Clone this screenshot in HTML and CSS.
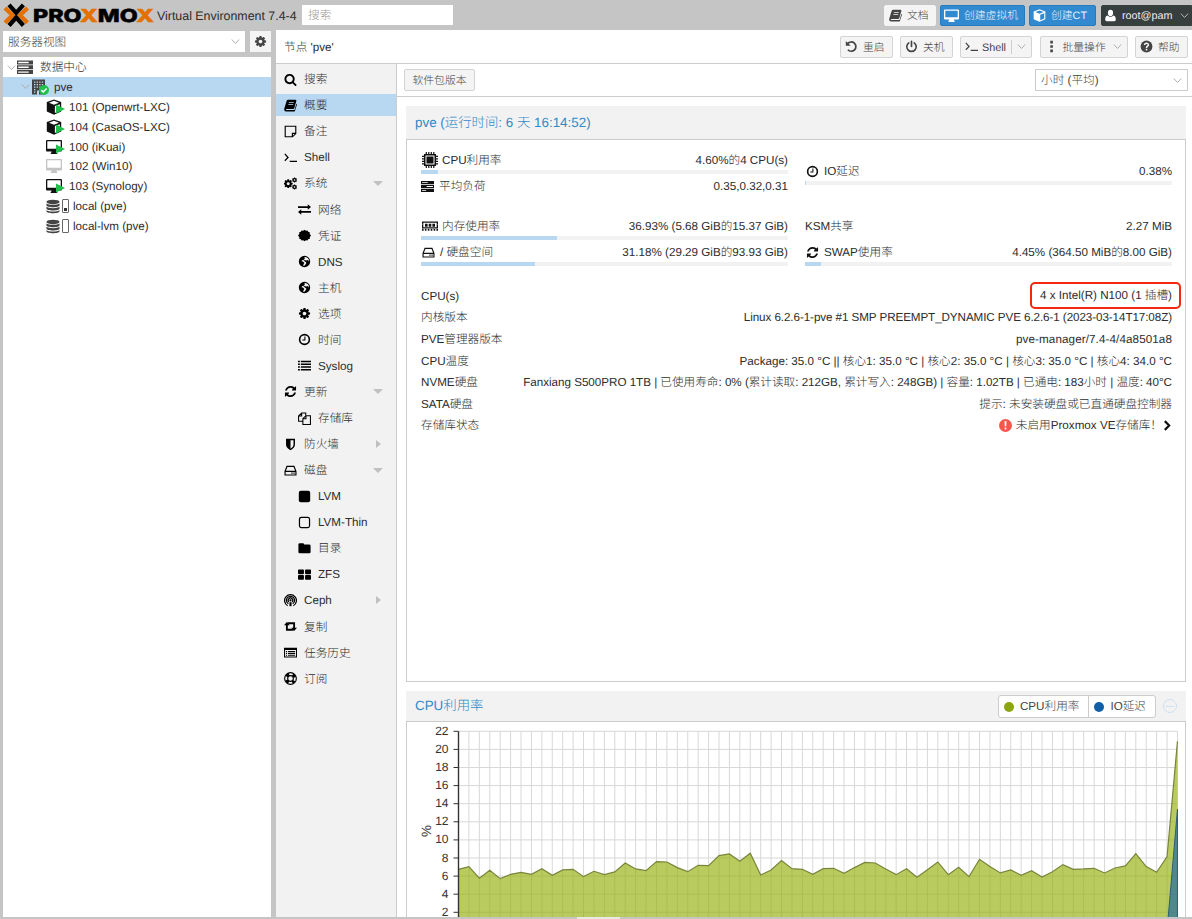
FILE: index.html
```
<!DOCTYPE html>
<html lang="zh-Hans">
<head>
    <meta charset="UTF-8">
    <meta name="viewport" content="width=device-width, initial-scale=1.0">
    <title>pve - Proxmox Virtual Environment</title>
    <link rel="stylesheet" href="styles.css">
</head>
<body>
    <svg class="sprite" xmlns="http://www.w3.org/2000/svg">
        <symbol id="search" viewBox="0 0 1792 1792"><path d="M1216 832q0-185-131.5-316.5t-316.5-131.5-316.5 131.5-131.5 316.5 131.5 316.5 316.5 131.5 316.5-131.5 131.5-316.5zm512 832q0 52-38 90t-90 38q-54 0-90-38l-343-342q-179 124-399 124-143 0-273.5-55.5t-225-150-150-225-55.5-273.5 55.5-273.5 150-225 225-150 273.5-55.5 273.5 55.5 225 150 150 225 55.5 273.5q0 220-124 399l343 343q37 37 37 90z"/></symbol>
        <symbol id="cog" viewBox="0 0 1792 1792"><path d="M1152 896q0-106-75-181t-181-75-181 75-75 181 75 181 181 75 181-75 75-181zm512-109v222q0 12-8 23t-20 13l-185 28q-19 54-39 91 35 50 107 138 10 12 10 25t-9 23q-27 37-99 108t-94 71q-12 0-26-9l-138-108q-44 23-91 38-16 136-29 186-7 28-36 28h-222q-14 0-24.5-8.5t-11.5-21.5l-28-184q-49-16-90-37l-141 107q-10 9-25 9-14 0-25-11-126-114-165-168-7-10-7-23 0-12 8-23 15-21 51-66.5t54-70.5q-27-50-41-99l-183-27q-13-2-21-12.5t-8-23.5v-222q0-12 8-23t19-13l186-28q14-46 39-92-40-57-107-138-10-12-10-24 0-10 9-23 26-36 98.5-107.5t94.5-71.5q13 0 26 10l138 107q44-23 91-38 16-136 29-186 7-28 36-28h222q14 0 24.5 8.5t11.5 21.5l28 184q49 16 90 37l142-107q9-9 24-9 13 0 25 10 129 119 165 170 7 8 7 22 0 12-8 23-15 21-51 66.5t-54 70.5q26 50 41 98l183 28q13 2 21 12.5t8 23.5z"/></symbol>
        <symbol id="refresh" viewBox="0 0 1792 1792"><path d="M1639 1056q0 5-1 7-64 268-268 434.5t-478 166.5q-146 0-282.5-55t-243.5-157l-129 129q-19 19-45 19t-45-19-19-45v-448q0-26 19-45t45-19h448q26 0 45 19t19 45-19 45l-137 137q71 66 161 102t187 36q134 0 250-65t186-179q11-17 53-117 8-23 30-23h192q13 0 22.5 9.5t9.5 22.5zm25-800v448q0 26-19 45t-45 19h-448q-26 0-45-19t-19-45 19-45l138-138q-148-137-349-137-134 0-250 65t-186 179q-11 17-53 117-8 23-30 23h-199q-13 0-22.5-9.5t-9.5-22.5v-7q65-268 270-434.5t480-166.5q146 0 284 55.5t245 156.5l130-129q19-19 45-19t45 19 19 45z"/></symbol>
        <symbol id="book" viewBox="0 0 16 16"><path fill-rule="evenodd" d="M5.200 1h8.800q1.500.1 1.200 1.500l-2.500 8.700q-.3 1.200-1.500 1.200H3q-.9.1-.9.600.1.600 1 .6h9.200q.7 0 .9-.7l2-7q.9.400.7 1.300l-2.400 7.200Q13.200 15.500 12 15.500H2.600Q.2 15.300.2 13q0-.7.2-1.300L3.100 2.700Q3.600 1 5.200 1zM6.200 4l-.3.800h6l.3-.8zM5.500 6.300l-.3.800h6l.3-.8z"/></symbol>
        <symbol id="note" viewBox="0 0 16 16"><path fill="none" stroke="currentColor" stroke-width="1.400" d="M1.500 1.500h13v9l-4 4h-9zM14.500 10.300h-4.200v4.200"/></symbol>
        <symbol id="terminal" viewBox="0 0 16 16"><path fill="none" stroke="currentColor" stroke-width="1.500" d="M1 3.500 5 8l-4 4M7 12.700h9"/></symbol>
        <symbol id="cogs" viewBox="0 0 16 16"><use href="#cog" x="-1.200" y="1.800" width="12.800" height="12.800"/><use href="#cog" x="9.300" y="0" width="7.400" height="7.400"/><use href="#cog" x="9.300" y="8.600" width="7.400" height="7.400"/></symbol>
        <symbol id="exchange" viewBox="0 0 16 16"><path d="M0 4h12V1.600L16 5l-4 3.400V6.200H0zM16 9.800H4V7.600L0 11l4 3.400V12h12z"/></symbol>
        <symbol id="badge" viewBox="0 0 16 16"><path d="m8 1 1.600 1.300 2-.6.9 1.800 2 .4-.1 2.100L16 8l-1.500 2 .1 2-2.100.5-.9 1.800-2-.5L8 15l-1.600-1.300-2 .6-.9-1.800-2-.5.1-2L0 8l1.600-2-.1-2.100 2-.4.9-1.800 2 .6z"/></symbol>
        <symbol id="globe" viewBox="0 0 16 16"><path fill-rule="evenodd" d="M8 1a7 7 0 1 1 0 14A7 7 0 0 1 8 1zM9 2.600l-1.600.9 1.200.8-1.300 1.500L5 6.500l-.8 1.200 1.900.4 1.700 1.700-1 1.700-.3 2 1.800-.5 1.400-2.100.7-1.500-2.200-1.700L6.500 7l2-.9 1.400.8L12.500 6l.9 2 .4-.5A6 6 0 0 0 9 2.600z"/></symbol>
        <symbol id="clock" viewBox="0 0 16 16"><g fill="none" stroke="currentColor"><circle cx="8" cy="8" r="6" stroke-width="2"/><path stroke-width="1.300" d="M8.500 4.200v4.300H5.300"/></g></symbol>
        <symbol id="list" viewBox="0 0 16 16"><path d="M0 2h2.300v2H0zM3.500 2H16v2H3.500zM0 5.400h2.300v2H0zM3.500 5.400H16v2H3.500zM0 8.800h2.300v2H0zM3.500 8.800H16v2H3.500zM0 12.200h2.300v2H0zM3.500 12.200H16v2H3.500z"/></symbol>
        <symbol id="files" viewBox="0 0 16 16"><path fill="none" stroke="currentColor" stroke-width="1.300" d="M6 11.500H.700V5L4.500 1.200H9.500V4M4.500 1.200V5H.700M6 8.300 9.800 4.500h5.500v10.800H6zM9.800 4.500v3.800H6"/></symbol>
        <symbol id="shield" viewBox="0 0 16 16"><path fill-rule="evenodd" d="M2.500 1h11v7.300c0 3.200-3 5.500-5.500 6.900-2.500-1.400-5.500-3.700-5.500-6.900zM8 2.900v10.200c2-1.200 3.700-2.900 3.700-4.800V2.900z"/></symbol>
        <symbol id="hdd" viewBox="0 0 16 16"><path fill="none" stroke="currentColor" stroke-width="1.400" d="M1.300 9 3.700 3h8.600l2.400 6v4.500H1.300zM1.300 9h13.400"/><path d="M9 10.600h1.600v1.500H9zM11.600 10.600h1.600v1.500h-1.600z"/></symbol>
        <symbol id="square" viewBox="0 0 16 16"><rect x="1" y="1" width="14" height="14" rx="2.500"/></symbol>
        <symbol id="square-o" viewBox="0 0 16 16"><rect x="1.800" y="1.800" width="12.400" height="12.400" rx="2.200" fill="none" stroke="currentColor" stroke-width="1.500"/></symbol>
        <symbol id="folder" viewBox="0 0 16 16"><path d="M.500 3.200q0-1.700 1.700-1.700H6q1.500 0 1.600 1.700h6.200q1.700 0 1.700 1.600v7.400q0 1.600-1.700 1.600H2.200q-1.700 0-1.700-1.600z"/></symbol>
        <symbol id="th-large" viewBox="0 0 16 16"><rect x="0" y="1.700" width="7.300" height="5.900" rx="1"/><rect x="8.700" y="1.700" width="7.300" height="5.900" rx="1"/><rect x="0" y="8.700" width="7.300" height="5.900" rx="1"/><rect x="8.700" y="8.700" width="7.300" height="5.900" rx="1"/></symbol>
        <symbol id="ceph" viewBox="0 0 16 16"><g fill="none" stroke="currentColor" stroke-width="1.500"><path d="M4.500 14.500a7.300 7.300 0 1 1 7 0M5.300 12A5 5 0 1 1 10.700 12M6 9.800a2.800 2.800 0 1 1 4 0"/></g><circle cx="8" cy="7.800" r="1.400"/><path d="M6.700 10h2.600v5H6.700z"/></symbol>
        <symbol id="retweet" viewBox="0 0 16 16"><path d="M3.500 2.500 7 6.500H4.700v4.300H10l1.900 2.300H2.400V6.500H0zM12.500 13.500 9 9.500h2.300V5.200H6L4.100 2.900h9.500v6.600H16z"/></symbol>
        <symbol id="list-alt" viewBox="0 0 16 16"><path fill-rule="evenodd" d="M0 2h16v12.300H0zM1.200 5v8h13.600V5z"/><path d="M2.300 6h1.500v1.300H2.300zM5 6h8.700v1.300H5zM2.300 8.400h1.500v1.300H2.300zM5 8.400h8.700v1.300H5zM2.300 10.800h1.500v1.300H2.300zM5 10.800h8.700v1.300H5z"/></symbol>
        <symbol id="ring" viewBox="0 0 16 16"><g fill="none" stroke="currentColor"><circle cx="8" cy="8" r="7.200" stroke-width="1.400"/><circle cx="8" cy="8" r="3.500" stroke-width="1.400"/><circle cx="8" cy="8" r="5.300" stroke-width="3.400" stroke-dasharray="4.160 4.160" stroke-dashoffset="2.080" transform="rotate(45 8 8)"/></g></symbol>
        <symbol id="server" viewBox="0 0 16 16"><path fill-rule="evenodd" d="M0 1.300h16v3.900H0zM0 6.200h16v3.700H0zM0 10.900h16v3.800H0zM1.300 2.700v1h7v-1zM7 7.500v1h7.700v-1zM1.300 12.300v1h5v-1z"/></symbol>
        <symbol id="rack" viewBox="0 0 16 16"><path fill-rule="evenodd" d="M0 1.500h16v4H0zM0 6.300h16v4H0zM0 11.100h16v4H0zM1.200 2.800v1.400h10.500V2.800zM1.200 7.600V9h10.500V7.600zM1.200 12.400v1.400h10.500v-1.400z"/></symbol>
        <symbol id="chip" viewBox="0 0 16 16"><path fill-rule="evenodd" d="M2 2h12v12H2zM3.500 3.500v9h9v-9z"/><path d="M4.500 4.500h7v7h-7zM3.700 0h1.200v2.500H3.700zM6.200 0h1.200v2.500H6.200zM8.700 0h1.200v2.500H8.700zM11.200 0h1.200v2.500h-1.200zM3.700 13.500h1.200V16H3.700zM6.200 13.500h1.200V16H6.200zM8.700 13.500h1.200V16H8.700zM11.200 13.500h1.200V16h-1.200zM0 3.700h2.500v1.200H0zM0 6.200h2.500v1.200H0zM0 8.700h2.500v1.200H0zM0 11.200h2.500v1.200H0zM13.500 3.700H16v1.200h-2.500zM13.500 6.200H16v1.200h-2.500zM13.500 8.700H16v1.200h-2.500zM13.500 11.200H16v1.200h-2.500z"/></symbol>
        <symbol id="memory" viewBox="0 0 16 16"><path fill-rule="evenodd" d="M0 3.500h16v2q-.9.600 0 1.500v3.500H0V7q.9-.9 0-1.500zM1.300 4.800v4.400h13.400V4.800z"/><path d="M3 5.700h2.600v3H3zM6.700 5.700h2.600v3H6.700zM10.400 5.700H13v3h-2.600zM0 11h1.600v1.800H0zM2.900 11h1.600v1.800H2.900zM5.800 11h1.600v1.800H5.800zM8.700 11h1.600v1.800H8.700zM11.600 11h1.600v1.800h-1.600zM14.400 11H16v1.800h-1.600z"/></symbol>
        <symbol id="building" viewBox="0 0 16 16"><path fill-rule="evenodd" d="M1 .500h13v15H1zM3 2.500v1.200h1.400V2.500zM5.600 2.500v1.200H7V2.500zM8.200 2.500v1.200h1.400V2.500zM10.800 2.500v1.200h1.400V2.500zM3 5v1.200h1.400V5zM5.600 5v1.200H7V5zM8.200 5v1.200h1.400V5zM10.800 5v1.200h1.400V5zM3 7.500v1.200h1.400V7.500zM5.600 7.500v1.200H7V7.500zM8.200 7.500v1.200h1.400V7.500zM3 10v1.200h1.400V10zM3 12.500v1.200h1.400v-1.200zM6 11.500v4h2v-4z"/></symbol>
        <symbol id="check" viewBox="0 0 16 16"><circle cx="8" cy="8" r="8" fill="#21bf4b"/><path fill="none" stroke="#fff" stroke-width="2.400" d="m3.800 8.200 3 3 5.400-5.500"/></symbol>
        <symbol id="play" viewBox="0 0 16 16"><path fill="#21bf4b" d="m0 0 16 8-16 8z"/></symbol>
        <symbol id="cube" viewBox="0 0 16 16"><path fill-rule="evenodd" d="M8 .400 15.200 3v9.600L8 15.800.800 12.600V3zM8 1.800 3 3.700l5 2 5-2zM8.900 7v6.900l4.900-2.200V5.200z"/></symbol>
        <symbol id="desktop" viewBox="0 0 16 16"><path fill-rule="evenodd" d="M1 1h14q1 0 1 1v9.500q0 1-1 1h-4.600q0 1 .9 1.500v1H4.700v-1q.9-.5.9-1.500H1q-1 0-1-1V2q0-1 1-1zM1.300 2.300v7.400h13.400V2.300z"/></symbol>
        <symbol id="screen" viewBox="0 0 16 16"><path fill-rule="evenodd" d="M1 1.500h14q1 0 1 1v8.800q0 1-1 1h-4.600q0 1 .9 1.500v1H4.700v-1q.9-.5.9-1.500H1q-1 0-1-1V2.500q0-1 1-1zM1.400 2.900v6.900h13.200V2.900z"/></symbol>
        <symbol id="database" viewBox="0 0 16 16"><ellipse cx="8" cy="2.800" rx="7.500" ry="2.600"/><path d="M.5 4.600c2 2 13 2 15 0v2c0 3-15 3-15 0zM.5 8.400c2 2 13 2 15 0v2c0 3-15 3-15 0zM.5 12.200c2 2 13 2 15 0v1.300c0 3-15 3-15 0z"/></symbol>
        <symbol id="undo" viewBox="0 0 16 16"><path fill="none" stroke="currentColor" stroke-width="2.100" d="M3.300 4.500A5.700 5.700 0 1 1 3.500 12"/><path d="M1 1.200v6h6z"/></symbol>
        <symbol id="power" viewBox="0 0 16 16"><path fill="none" stroke="currentColor" stroke-width="2" stroke-linecap="round" d="M8 1.500V8M4.700 3.500a5.800 5.800 0 1 0 6.600 0"/></symbol>
        <symbol id="dots" viewBox="0 0 16 16"><path d="M6.500 1h3.200v3.200H6.500zM6.500 6.400h3.200v3.200H6.500zM6.500 11.800h3.200V15H6.500z"/></symbol>
        <symbol id="help" viewBox="0 0 16 16"><circle cx="8" cy="8" r="7.300"/><path fill="none" stroke="#f3f3f3" stroke-width="1.900" d="M5.600 6.200C5.800 3.400 10.400 3.500 10.300 6.100 10.200 7.600 8 7.600 8 9.700M8 10.900v2"/></symbol>
        <symbol id="user" viewBox="0 0 16 16"><path d="M8 1q3.200.2 3.200 3.800T8 9Q4.800 8.400 4.800 4.800T8 1zM4.300 8Q8 11.500 11.700 8q2.900.5 2.800 5.300 0 1.700-1.800 1.700H3.300q-1.800 0-1.800-1.700Q1.400 8.500 4.300 8z"/></symbol>
        <symbol id="alert" viewBox="0 0 16 16"><circle cx="8" cy="8" r="8" fill="#f5574b"/><path fill="#fff" d="M6.800 2.800h2.400L8.900 9H7.100zM7 10.500h2v2.300H7z"/></symbol>
        <symbol id="right" viewBox="0 0 16 16"><path fill="none" stroke="currentColor" stroke-width="3.400" d="m4.500 1 7 7-7 7"/></symbol>
        <symbol id="down" viewBox="0 0 16 16"><path fill="none" stroke="currentColor" stroke-width="1.700" d="m1.500 4.500 6.500 7 6.500-7"/></symbol>
    </svg>

    <div class="header">
        <svg class="logo" viewBox="0 0 154 30">
            <g fill="none" stroke-width="4.200">
                <path stroke="#e57000" d="m5 8 7.500 7.300L5 22.800M27.500 8 20 15.300l7.500 7.500"/>
                <path stroke="#000" d="m9 4.800 7.200 8 7.200-8M9 25.500l7.200-8 7.200 8"/>
            </g>
            <text class="logo-text" x="33" y="22" textLength="121" lengthAdjust="spacingAndGlyphs">PRO<tspan class="orange">X</tspan>MO<tspan class="orange">X</tspan></text>
        </svg>
        <span class="version">Virtual Environment 7.4-4</span>
        <div class="search-box">搜索</div>
        <div class="btn w-doc"><svg class="icon"><use href="#book"/></svg><span>文档</span></div>
        <div class="btn blue w-vm"><svg class="icon big"><use href="#screen"/></svg><span>创建虚拟机</span></div>
        <div class="btn blue w-ct"><svg class="icon"><use href="#cube"/></svg><span>创建CT</span></div>
        <div class="btn dark w-user"><svg class="icon"><use href="#user"/></svg><span>root@pam</span><svg class="icon arrow"><use href="#down"/></svg></div>
    </div>

    <div class="main">
        <div class="sidebar">
            <div class="view-row">
                <div class="combo view-combo"><span>服务器视图</span><svg class="icon arrow"><use href="#down"/></svg></div>
                <div class="gear"><svg class="icon"><use href="#cog"/></svg></div>
            </div>
            <div class="tree">
                <div class="node root"><svg class="icon arrow"><use href="#down"/></svg><svg class="icon i16"><use href="#rack"/></svg><span>数据中心</span></div>
                <div class="node host selected"><svg class="icon arrow"><use href="#down"/></svg><div class="stack"><svg class="icon i16"><use href="#building"/></svg><svg class="icon state-ok"><use href="#check"/></svg></div><span>pve</span></div>
                <div class="node guest"><div class="stack"><svg class="icon i16"><use href="#cube"/></svg><svg class="icon state"><use href="#play"/></svg></div><span>101 (Openwrt-LXC)</span></div>
                <div class="node guest"><div class="stack"><svg class="icon i16"><use href="#cube"/></svg><svg class="icon state"><use href="#play"/></svg></div><span>104 (CasaOS-LXC)</span></div>
                <div class="node guest"><div class="stack"><svg class="icon i16"><use href="#desktop"/></svg><svg class="icon state"><use href="#play"/></svg></div><span>100 (iKuai)</span></div>
                <div class="node guest"><div class="stack off"><svg class="icon i16"><use href="#desktop"/></svg></div><span>102 (Win10)</span></div>
                <div class="node guest"><div class="stack"><svg class="icon i16"><use href="#desktop"/></svg><svg class="icon state"><use href="#play"/></svg></div><span>103 (Synology)</span></div>
                <div class="node storage"><svg class="icon db"><use href="#database"/></svg><i class="usage"><b class="used"></b></i><span>local (pve)</span></div>
                <div class="node storage"><svg class="icon db"><use href="#database"/></svg><i class="usage"></i><span>local-lvm (pve)</span></div>
            </div>
        </div>

        <div class="workspace">
            <div class="titlebar">
                <span class="title">节点 'pve'</span>
                <div class="btn w-52"><svg class="icon"><use href="#undo"/></svg><span>重启</span></div>
                <div class="btn w-52"><svg class="icon"><use href="#power"/></svg><span>关机</span></div>
                <div class="btn w-shell"><svg class="icon"><use href="#terminal"/></svg><span>Shell</span><i class="split"></i><svg class="icon arrow"><use href="#down"/></svg></div>
                <div class="btn w-bulk"><svg class="icon"><use href="#dots"/></svg><span>批量操作</span><svg class="icon arrow"><use href="#down"/></svg></div>
                <div class="btn w-52"><svg class="icon"><use href="#help"/></svg><span>帮助</span></div>
            </div>
            <div class="columns">
                <div class="nav">
                    <div class="item"><svg class="icon"><use href="#search"/></svg><span>搜索</span></div>
                    <div class="item active"><svg class="icon"><use href="#book"/></svg><span>概要</span></div>
                    <div class="item"><svg class="icon"><use href="#note"/></svg><span>备注</span></div>
                    <div class="item"><svg class="icon"><use href="#terminal"/></svg><span>Shell</span></div>
                    <div class="item"><svg class="icon"><use href="#cogs"/></svg><span>系统</span><i class="tri-down"></i></div>
                    <div class="item sub"><svg class="icon"><use href="#exchange"/></svg><span>网络</span></div>
                    <div class="item sub"><svg class="icon"><use href="#badge"/></svg><span>凭证</span></div>
                    <div class="item sub"><svg class="icon"><use href="#globe"/></svg><span>DNS</span></div>
                    <div class="item sub"><svg class="icon"><use href="#globe"/></svg><span>主机</span></div>
                    <div class="item sub"><svg class="icon"><use href="#cog"/></svg><span>选项</span></div>
                    <div class="item sub"><svg class="icon"><use href="#clock"/></svg><span>时间</span></div>
                    <div class="item sub"><svg class="icon"><use href="#list"/></svg><span>Syslog</span></div>
                    <div class="item"><svg class="icon"><use href="#refresh"/></svg><span>更新</span><i class="tri-down"></i></div>
                    <div class="item sub"><svg class="icon"><use href="#files"/></svg><span>存储库</span></div>
                    <div class="item"><svg class="icon"><use href="#shield"/></svg><span>防火墙</span><i class="tri-right"></i></div>
                    <div class="item"><svg class="icon"><use href="#hdd"/></svg><span>磁盘</span><i class="tri-down"></i></div>
                    <div class="item sub"><svg class="icon"><use href="#square"/></svg><span>LVM</span></div>
                    <div class="item sub"><svg class="icon"><use href="#square-o"/></svg><span>LVM-Thin</span></div>
                    <div class="item sub"><svg class="icon"><use href="#folder"/></svg><span>目录</span></div>
                    <div class="item sub"><svg class="icon"><use href="#th-large"/></svg><span>ZFS</span></div>
                    <div class="item"><svg class="icon"><use href="#ceph"/></svg><span>Ceph</span><i class="tri-right"></i></div>
                    <div class="item"><svg class="icon"><use href="#retweet"/></svg><span>复制</span></div>
                    <div class="item"><svg class="icon"><use href="#list-alt"/></svg><span>任务历史</span></div>
                    <div class="item"><svg class="icon"><use href="#ring"/></svg><span>订阅</span></div>
                </div>

                <div class="content">
                    <div class="toolbar">
                        <div class="btn w-pkg"><span>软件包版本</span></div>
                        <div class="combo time-combo"><span>小时 (平均)</span><svg class="icon arrow"><use href="#down"/></svg></div>
                    </div>
                    <div class="panels">
                        <div class="panel-head">pve (运行时间: 6 天 16:14:52)</div>
                        <div class="panel-body summary">
                            <div class="stats">
                                <div class="stat-col">
                                    <div class="stat"><div class="line"><svg class="icon i16"><use href="#chip"/></svg><span>CPU利用率</span><span class="val">4.60%的4 CPU(s)</span></div><div class="bar"><div class="fill" style="width: 4.6%"></div></div></div>
                                    <div class="stat load"><div class="line"><svg class="icon"><use href="#server"/></svg><span>平均负荷</span><span class="val">0.35,0.32,0.31</span></div></div>
                                    <div class="stat"><div class="line"><svg class="icon i16"><use href="#memory"/></svg><span>内存使用率</span><span class="val">36.93% (5.68 GiB的15.37 GiB)</span></div><div class="bar"><div class="fill" style="width: 36.93%"></div></div></div>
                                    <div class="stat"><div class="line"><svg class="icon pad"><use href="#hdd"/></svg><span>/ 硬盘空间</span><span class="val">31.18% (29.29 GiB的93.93 GiB)</span></div><div class="bar"><div class="fill" style="width: 31.18%"></div></div></div>
                                </div>
                                <div class="stat-col">
                                    <div class="stat io"><div class="line"><svg class="icon pad"><use href="#clock"/></svg><span>IO延迟</span><span class="val">0.38%</span></div><div class="bar"><div class="fill" style="width: 0.38%"></div></div></div>
                                    <div class="stat"><div class="line"><span>KSM共享</span><span class="val">2.27 MiB</span></div></div>
                                    <div class="stat"><div class="line"><svg class="icon pad"><use href="#refresh"/></svg><span>SWAP使用率</span><span class="val">4.45% (364.50 MiB的8.00 GiB)</span></div><div class="bar"><div class="fill" style="width: 4.45%"></div></div></div>
                                </div>
                            </div>
                            <div class="info">
                                <div class="row"><span>CPU(s)</span><div class="val marked">4 x Intel(R) N100 (1 插槽)</div></div>
                                <div class="row"><span>内核版本</span><span class="val kernel">Linux 6.2.6-1-pve #1 SMP PREEMPT_DYNAMIC PVE 6.2.6-1 (2023-03-14T17:08Z)</span></div>
                                <div class="row"><span>PVE管理器版本</span><span class="val manager">pve-manager/7.4-4/4a8501a8</span></div>
                                <div class="row"><span>CPU温度</span><span class="val">Package: 35.0 °C || 核心1: 35.0 °C | 核心2: 35.0 °C | 核心3: 35.0 °C | 核心4: 34.0 °C</span></div>
                                <div class="row"><span>NVME硬盘</span><span class="val nvme">Fanxiang S500PRO 1TB | 已使用寿命: 0% (累计读取: 212GB, 累计写入: 248GB) | 容量: 1.02TB | 已通电: 183小时 | 温度: 40°C</span></div>
                                <div class="row"><span>SATA硬盘</span><span class="val">提示: 未安装硬盘或已直通硬盘控制器</span></div>
                                <div class="row"><span>存储库状态</span><div class="val repo"><svg class="icon"><use href="#alert"/></svg><span>未启用Proxmox VE存储库！</span><svg class="icon next"><use href="#right"/></svg></div></div>
                            </div>
                        </div>

                        <div class="panel-head chart-head">
                            <span>CPU利用率</span>
                            <div class="legend">
                                <div class="legend-item"><i class="dot green"></i><span>CPU利用率</span></div>
                                <div class="legend-item"><i class="dot navy"></i><span>IO延迟</span></div>
                            </div>
                            <i class="collapse"></i>
                        </div>
                        <div class="panel-body chart-body">
                            <svg id="chart" class="chart" width="778" height="196"></svg>
                        </div>
                    </div>
                </div>
            </div>
        </div>
    </div>
    <div class="footer"><i class="grip"></i></div>

    <script src="chart.js"></script>
</body>
</html>
```
FILE: styles.css
```
* {
    box-sizing: border-box;
}
body {
    margin: 0;
    width: 1192px;
    height: 919px;
    overflow: hidden;
    display: flex;
    flex-direction: column;
    background: #c5c5c5;
    color: #2c2c2c;
    font-family: "Liberation Sans", "Noto Sans CJK SC", sans-serif;
    font-size: 11.65px;
    font-weight: 300;
    line-height: 14px;
    white-space: nowrap;
    text-rendering: geometricPrecision;
}
.sprite {
    display: none;
}
.icon {
    width: 13px;
    height: 13px;
    flex: none;
    fill: currentColor;
    color: #111;
}
.icon.i16 {
    width: 16px;
    height: 16px;
}
.icon.arrow {
    width: 9px;
    height: 9px;
    color: #aaa;
}
/* optical centering of labels beside icons */
.node span,
.item span,
.line span,
.row span,
.btn span,
.combo span,
.title,
.legend span {
    padding-top: 2px;
}

/* header */
.header {
    height: 30px;
    flex: none;
    display: flex;
    align-items: center;
}
.logo {
    width: 154px;
    height: 30px;
    flex: none;
}
.logo-text {
    font-family: Inter, sans-serif;
    font-size: 18px;
    font-weight: 800;
    stroke: #000;
    stroke-width: .5;
}
.logo-text .orange {
    fill: #e57000;
    stroke: #e57000;
}
.version {
    width: 148px;
    padding: 1px 0 0 3px;
    font-size: 12.4px;
}
.search-box {
    width: 151px;
    height: 20px;
    margin-right: auto;
    padding-left: 6px;
    line-height: 22px;
    background: #fff;
    color: #999;
}
.btn {
    height: 22px;
    flex: none;
    display: flex;
    align-items: center;
    padding: 0 5px;
    border: 1px solid #d3d3d3;
    border-radius: 2px;
    background: #f4f4f4;
    color: #444;
    font-size: 10.8px;
}
.btn .icon {
    margin-right: 5px;
    color: #444;
}
.btn .arrow {
    margin: 0 0 0 7px;
    color: #aaa;
}
.header .btn {
    height: 21px;
    margin-left: 4px;
}
.header .w-doc {
    width: 52px;
    padding: 0 4px;
    margin: 0;
    border-color: #f4f4f4;
}
.header .blue {
    background: #3189d0;
    border-color: #267bc0;
    color: #eaf4fc;
    padding: 0 3px;
}
.header .blue .icon,
.header .dark .icon {
    color: #fff;
}
.header .blue .big {
    width: 15px;
    height: 15px;
}
.w-vm {
    width: 85px;
}
.w-ct {
    width: 67px;
}
.header .dark {
    width: 91px;
    margin-left: 5px;
    padding-left: 2px;
    background: #363e3e;
    border-color: #363e3e;
    border-radius: 2px 0 0 2px;
    color: #eee;
}
.header .dark .icon.arrow {
    color: #bbb;
}

/* sidebar */
.main {
    flex: 1;
    min-height: 0;
    display: flex;
}
.sidebar {
    width: 276px;
    flex: none;
    padding: 1px 5px 0 3px;
    display: flex;
    flex-direction: column;
}
.view-row {
    display: flex;
    justify-content: space-between;
    height: 21px;
    margin-bottom: 5px;
}
.combo {
    display: flex;
    align-items: center;
    justify-content: space-between;
    padding: 0 5px;
    background: #fff;
    color: #444;
}
.view-combo {
    width: 242px;
}
.gear {
    width: 21px;
    display: flex;
    align-items: center;
    justify-content: center;
    background: #f4f4f4;
}
.gear .icon {
    color: #444;
}
.tree {
    flex: 1;
    background: #fff;
}
.node {
    height: 19.9px;
    display: flex;
    align-items: center;
}
.node.selected,
.item.active {
    background: #b8d7f0;
}
.root {
    padding: 1px 0 0 4px;
}
.root .i16 {
    margin: 0 7px 0 1px;
    color: #444;
}
.host {
    padding-left: 18px;
}
.guest {
    padding-left: 43px;
}
.storage {
    padding-left: 43px;
}
.stack {
    position: relative;
    width: 23px;
    height: 16px;
}
.host .stack .i16 {
    color: #444;
}
.host .stack {
    margin-left: 1px;
}
.stack .i16 {
    display: block;
}
.stack .state {
    position: absolute;
    left: 10px;
    top: 5px;
    width: 9px;
    height: 10px;
}
.stack .state-ok {
    position: absolute;
    left: 8px;
    top: 6px;
    width: 10px;
    height: 10px;
}
.off .icon {
    color: #c4c4c4;
}
.db {
    width: 14px;
    height: 15px;
    color: #444;
}
.usage {
    width: 7px;
    height: 14px;
    margin: 0 4px 0 2px;
    border: 1px solid #666;
    border-radius: 1px;
    display: flex;
    align-items: flex-end;
    padding: 1px;
}
.used {
    width: 3px;
    height: 3px;
    background: #333;
}

/* workspace */
.workspace {
    flex: 1;
    min-width: 0;
    display: flex;
    flex-direction: column;
    background: #fff;
}
.titlebar {
    height: 34px;
    flex: none;
    display: flex;
    align-items: center;
    gap: 7.5px;
    padding: 0 4.5px 0 8px;
    border-bottom: 1px solid #ccc;
}
.title {
    margin-right: auto;
}
.w-52 {
    width: 52.5px;
    padding: 0 4px;
}
.w-shell {
    width: 72px;
    padding: 0 4px;
}
.w-shell .icon {
    margin-right: 4px;
}
.w-shell .arrow {
    margin: 0 0 0 5px;
}
.w-bulk {
    width: 88px;
    padding: 0 4px;
}
.split {
    width: 1px;
    height: 14px;
    margin-left: 5px;
    background: #d0d0d0;
}
.columns {
    flex: 1;
    min-height: 0;
    display: flex;
}
.nav {
    width: 121px;
    flex: none;
    padding-top: 4.4px;
    background: #f2f2f2;
    border-right: 1px solid #ccc;
}
.item {
    height: 21.7px;
    margin-bottom: 4.39px;
    padding: 0 13px 0 8px;
    display: flex;
    align-items: center;
}
.item .icon {
    margin-right: 7px;
    color: #000;
}
.item.sub {
    padding-left: 22px;
}
.tri-down,
.tri-right {
    margin-left: auto;
    border: 5px solid transparent;
}
.tri-down {
    border-top-color: #c0c0c0;
    border-bottom: 0;
}
.tri-right {
    border-width: 4px 0 4px 5px;
    border-left-color: #c0c0c0;
    margin-right: 2px;
}
.content {
    flex: 1;
    min-width: 0;
    display: flex;
    flex-direction: column;
}
.toolbar {
    height: 33px;
    flex: none;
    display: flex;
    align-items: center;
    justify-content: space-between;
    padding: 0 4px 0 7px;
    border-bottom: 1px solid #ccc;
}
.w-pkg {
    width: 71px;
    padding: 0;
    justify-content: center;
}
.time-combo {
    width: 153px;
    height: 22px;
    border: 1px solid #ccc;
}
.panels {
    flex: 1;
    min-height: 0;
    padding: 9px 6px 0 9px;
    display: flex;
    flex-direction: column;
}
.panel-head {
    height: 33px;
    flex: none;
    display: flex;
    align-items: center;
    padding-left: 9px;
    background: #f2f2f2;
    color: #3189c8;
    font-size: 13.4px;
}
.panel-body {
    border: 1px solid #ccc;
}
.summary {
    height: 543px;
    flex: none;
    margin-bottom: 9px;
    padding: 10px 13px 0 14px;
}
.stats {
    display: flex;
    justify-content: space-between;
    height: 135px;
}
.stat-col {
    width: 367px;
}
.stat {
    height: 26px;
}
.stat.load {
    margin-bottom: 14px;
}
.stat.io {
    margin: 11px 0 29px;
}
.line {
    height: 20px;
    display: flex;
    align-items: center;
}
.line .icon {
    margin-right: 5px;
}
.line .i16 {
    margin: 0 4px 0 1px;
}
.line .pad {
    margin-left: 1px;
}
.val {
    margin-left: auto;
}
.bar {
    height: 4px;
    background: #f2f2f2;
}
.fill {
    height: 4px;
    background: #b8d7f0;
}
.row {
    height: 21.6px;
    display: flex;
    align-items: center;
}
.marked {
    height: 27px;
    padding: 5px 7px 0 8px;
    margin-right: -9px;
    border: 2px solid #f5280f;
    border-radius: 5px;
}
.kernel {
    letter-spacing: -.08px;
}
.manager {
    letter-spacing: .1px;
}
.nvme {
    letter-spacing: -.02px;
}
.repo {
    display: flex;
    align-items: center;
}
.repo .icon {
    margin-right: 4px;
}
.repo .next {
    width: 10px;
    height: 11px;
    margin: 0;
}

/* chart */
.chart-head {
    height: 30px;
}
.legend {
    display: flex;
    margin-left: auto;
    height: 23px;
    border: 1px solid #ccc;
    border-radius: 3px;
    background: #fff;
    color: #444;
    font-size: 11.65px;
}
.legend-item {
    display: flex;
    align-items: center;
    padding: 0 9px 0 5px;
}
.legend-item + .legend-item {
    border-left: 1px solid #ccc;
}
.dot {
    width: 10px;
    height: 10px;
    margin: 1px 6px 0 0;
    border-radius: 50%;
}
.green {
    background: #8ba50c;
}
.navy {
    background: #115fa6;
}
.collapse {
    width: 14px;
    height: 14px;
    margin: 0 9px 0 7px;
    border: 1px solid #cfdfee;
    border-radius: 50%;
    display: flex;
    align-items: center;
    justify-content: center;
}
.collapse::after {
    content: "";
    width: 8px;
    height: 1px;
    background: #cfdfee;
}
.chart-body {
    flex: 1;
    border-bottom: 0;
    overflow: hidden;
}
.chart {
    display: block;
}
.chart text {
    font-size: 12px;
    fill: #333;
}
.chart .unit {
    font-size: 13.5px;
}
.footer {
    height: 2px;
    flex: none;
    display: flex;
}
.grip {
    width: 43px;
    height: 2px;
    margin-left: 577px;
    background: #e8e8e8;
}
```
FILE: chart.js
```
const cpu = [
    6.75, 7.05, 5.76, 6.64, 5.72, 6.2, 6.42, 6.2, 6.82, 6.09,
    6.68, 6.75, 5.94, 6.53, 6.16, 6.46, 7.45, 6.79, 6.6, 7.6,
    7.56, 6.94, 6.49, 7.19, 7.16, 8.26, 8.45, 7.64, 8.52, 6.13,
    6.68, 7.71, 6.82, 6.75, 6.2, 6.82, 6.86, 6.31, 6.94, 7.52,
    7.45, 6.79, 6.16, 6.82, 5.87, 6.71, 7.56, 6.16, 6.97, 5.94,
    7.86, 7.05, 6.35, 6.68, 6.09, 6.6, 5.9, 6.49, 7.27, 6.75,
    6.79, 6.86, 6.35, 6.9, 7.12, 8.48, 7.05, 6.42, 8.15, 20.9
];
const left = 51.5;
const top0 = 9.3;
const stepX = 10.42;
const unit = 9.05;
const right = left + stepX * 69;
const px = i => (left + stepX * i).toFixed(2);
const py = v => (top0 + (22 - v) * unit).toFixed(2);

let svg = '';
for (let i = 1; i < 70; i++) {
    svg += `<path stroke="#d8d8d8" d="M${px(i)} ${top0}V${py(0)}"/>`;
}
for (let v = 22; v > 0; v -= 2) {
    svg += `<path stroke="#d8d8d8" d="M${left} ${py(v)}H${right}"/>`;
}

const points = cpu.map((v, i) => `${px(i)} ${py(v)}`).join('L');
svg += `<path fill="#94ae0a" fill-opacity=".66" d="M${left} ${py(0)}L${points}V${py(0)}z"/>`;
svg += `<path fill="none" stroke="#76863a" stroke-width="1.2" d="M${points}"/>`;
svg += `<path fill="#115fa6" fill-opacity=".62" stroke="#2a6277" d="M${px(68)} ${py(0)}L${px(69)} ${py(13.4)}V${py(0)}z"/>`;

svg += `<path stroke="#333" stroke-width="1.4" d="M${left} ${top0}V${py(0)}"/>`;
for (let v = 22; v > 0; v -= 2) {
    svg += `<path stroke="#333" d="M${left - 5} ${py(v)}H${left}"/>`;
    svg += `<text x="${left - 10}" y="${+py(v) + 3.5}" text-anchor="end">${v}</text>`;
}
svg += `<text class="unit" transform="translate(24 115) rotate(-90)">%</text>`;
document.getElementById('chart').innerHTML = svg;
```
